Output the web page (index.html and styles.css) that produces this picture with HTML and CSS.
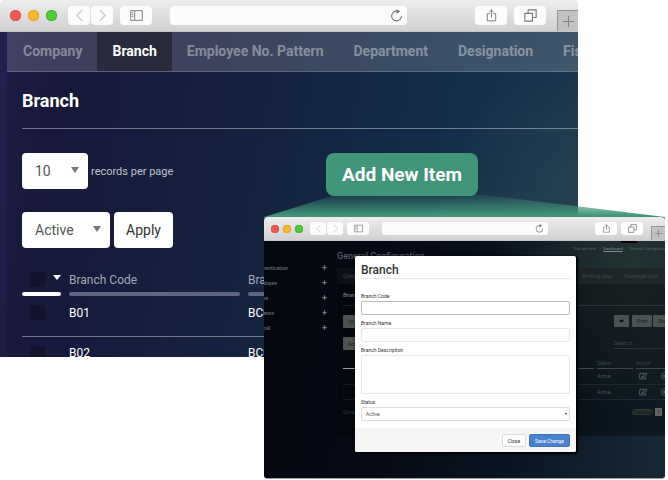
FILE: index.html
```html
<!DOCTYPE html>
<html lang="en">
<head>
<meta charset="utf-8">
<meta name="viewport" content="width=device-width, initial-scale=1">
<title>Branch configuration</title>
<link rel="stylesheet" href="styles.css">
</head>
<body>
<svg class="sprite" aria-hidden="true">
  <symbol id="i-back" viewBox="0 0 12 12"><path d="M8.500 1 3.500 6l5 5"/></symbol>
  <symbol id="i-next" viewBox="0 0 12 12"><path d="m3.500 1 5 5-5 5"/></symbol>
  <symbol id="i-side" viewBox="0 0 14 12"><path d="M.8.800h12.400v10.400H.8zM5 .8v10.400M2 3h1.500M2 5h1.500M2 7h1.500"/></symbol>
  <symbol id="i-reload" viewBox="0 0 12 12"><path d="M10.500 6.200A4.500 4.500 0 1 1 6.500 2"/><path class="solid" d="M6 0l3.500 2.200L6 4.500z"/></symbol>
  <symbol id="i-share" viewBox="0 0 12 14"><path d="M4 5H1.500v7.800h9V5H8M6 9V1.200M3.600 3.300 6 1l2.400 2.300"/></symbol>
  <symbol id="i-tabs" viewBox="0 0 12 12"><path d="M.8 4h7v7.200h-7zM3.800 4V.800h7.400v7H8"/></symbol>
  <symbol id="i-plus" viewBox="0 0 12 12"><path d="M6 .8v10.400M.8 6h10.400"/></symbol>
  <symbol id="i-edit" viewBox="0 0 12 10"><path d="M9 6v3H1V1.500h6"/><path d="m4 7 .6-2.200L9.500.700l1.500 1.500-4.800 4.300z"/></symbol>
  <symbol id="i-disc" viewBox="0 0 12 12"><circle cx="6" cy="6" r="5"/><circle class="solid" cx="6" cy="6" r="2"/></symbol>
  <symbol id="i-eye" viewBox="0 0 12 8"><path class="solid" d="M0 4q6-7 12 0-6 7-12 0z"/></symbol>
</svg>

<main class="scene">
  <section class="window window--back">
    <header class="chrome">
      <span class="light light--red"></span><span class="light light--amber"></span><span class="light light--green"></span>
      <div class="nav">
        <button class="chip chip--nav" aria-label="Back"><svg><use href="#i-back"/></svg></button>
        <button class="chip chip--nav" aria-label="Forward"><svg><use href="#i-next"/></svg></button>
      </div>
      <button class="chip chip--side" aria-label="Sidebar"><svg><use href="#i-side"/></svg></button>
      <div class="address"><input type="text" aria-label="Address"><svg><use href="#i-reload"/></svg></div>
      <button class="chip chip--share" aria-label="Share"><svg><use href="#i-share"/></svg></button>
      <button class="chip chip--tabs" aria-label="Tabs"><svg><use href="#i-tabs"/></svg></button>
      <button class="new-tab" aria-label="New tab"><svg><use href="#i-plus"/></svg></button>
    </header>
    <div class="page">
      <div class="panel">
        <nav class="tabs">
          <a href="#">Company</a><a href="#" class="active">Branch</a><a href="#">Employee No. Pattern</a><a href="#">Department</a><a href="#">Designation</a><a href="#">Fiscal Year</a>
        </nav>
        <div class="content">
          <h1>Branch</h1>
          <div class="toolbar">
            <label class="records"><span class="pick pick--count"><select><option>10</option></select></span>records per page</label>
            <button class="add">Add New Item</button>
          </div>
          <div class="bulk">
            <span class="pick pick--state"><select aria-label="Status"><option>Active</option></select></span>
            <button class="apply">Apply</button>
          </div>
          <table class="grid">
            <thead>
              <tr>
                <th class="col-check"><div class="cell"><input type="checkbox" aria-label="Select all"><i class="sort"></i></div></th>
                <th class="col-code"><div class="cell">Branch Code</div></th>
                <th><div class="cell">Branch Name</div></th>
              </tr>
            </thead>
            <tbody>
              <tr><td><input type="checkbox" aria-label="Select B01"></td><td>B01</td><td>BC01</td></tr>
              <tr><td><input type="checkbox" aria-label="Select B02"></td><td>B02</td><td>BC02</td></tr>
            </tbody>
          </table>
        </div>
      </div>
    </div>
  </section>

  <div class="beam"></div>

  <section class="window window--front">
    <header class="chrome">
      <span class="light light--red"></span><span class="light light--amber"></span><span class="light light--green"></span>
      <div class="nav">
        <button class="chip chip--nav" aria-label="Back"><svg><use href="#i-back"/></svg></button>
        <button class="chip chip--nav" aria-label="Forward"><svg><use href="#i-next"/></svg></button>
      </div>
      <button class="chip chip--side" aria-label="Sidebar"><svg><use href="#i-side"/></svg></button>
      <div class="address"><input type="text" aria-label="Address"><svg><use href="#i-reload"/></svg></div>
      <button class="chip chip--share" aria-label="Share"><svg><use href="#i-share"/></svg></button>
      <button class="chip chip--tabs" aria-label="Tabs"><svg><use href="#i-tabs"/></svg></button>
      <button class="new-tab" aria-label="New tab"><svg><use href="#i-plus"/></svg></button>
    </header>
    <div class="dim">
      <ul class="menu">
        <li>Authentication<svg><use href="#i-plus"/></svg></li>
        <li>Employee<svg><use href="#i-plus"/></svg></li>
        <li>Leave<svg><use href="#i-plus"/></svg></li>
        <li>Expense<svg><use href="#i-plus"/></svg></li>
        <li>Payroll<svg><use href="#i-plus"/></svg></li>
      </ul>
      <div class="dim-main">
        <div class="crumbs"><span>You are here</span><span>›</span><a href="#">Dashboard</a><span>›</span><span>General Configuration</span></div>
        <h2>General Configuration</h2>
        <div class="dim-panel">
          <nav class="dim-tabs"><a href="#" class="first">Company</a><a href="#">Working Days</a><a href="#">Exchange Rate</a></nav>
          <h3>Branch</h3>
          <div class="dim-row">
            <button class="dim-btn dim-btn--field">10</button>
            <button class="dim-btn" aria-label="Show columns"><svg><use href="#i-eye"/></svg></button>
            <div class="dim-group"><button class="dim-btn">Print</button><button class="dim-btn">Export</button></div>
          </div>
          <div class="dim-row">
            <button class="dim-btn dim-btn--field">Active</button>
            <input class="dim-search" type="text" placeholder="Search" aria-label="Search">
          </div>
          <table class="dim-grid">
            <thead><tr><th class="d-check"><div></div></th><th class="d-wide"><div></div></th><th class="d-status"><div>Status</div></th><th><div>Action</div></th></tr></thead>
            <tbody>
              <tr><td></td><td></td><td>Active</td><td><div class="acts"><svg><use href="#i-edit"/></svg><svg><use href="#i-disc"/></svg></div></td></tr>
              <tr><td></td><td></td><td>Active</td><td><div class="acts"><svg><use href="#i-edit"/></svg><svg><use href="#i-disc"/></svg></div></td></tr>
            </tbody>
          </table>
          <div class="dim-foot"><span>Showing</span><a class="prev" href="#">Previous</a><a class="num" href="#">1</a></div>
        </div>
      </div>
    </div>

    <form class="modal">
      <div class="modal-body">
        <h2>Branch</h2>
        <label for="code">Branch Code</label>
        <input id="code" class="strong" type="text">
        <label for="name">Branch Name</label>
        <input id="name" type="text">
        <label for="desc">Branch Description</label>
        <textarea id="desc"></textarea>
        <label for="status">Status</label>
        <span class="pick pick--form"><select id="status"><option>Active</option></select></span>
      </div>
      <footer>
        <button type="button" class="close">Close</button>
        <button type="button" class="save">Save Change</button>
      </footer>
    </form>
  </section>
</main>
</body>
</html>
```
FILE: styles.css
```css
* { box-sizing: border-box; }
body { margin: 0; background: #fff; font-family: Roboto, "Liberation Sans", sans-serif; overflow: hidden; }
button, input, select, textarea { font: inherit; margin: 0; padding: 0; border: 0; appearance: none; outline: 0; }
h1, h2, h3, ul { margin: 0; padding: 0; font-weight: 500; }
a { color: inherit; text-decoration: none; }
.sprite { position: absolute; width: 0; height: 0; }
svg { fill: none; stroke: currentColor; stroke-width: 1; display: block; flex: none; }
.solid { fill: currentColor; stroke: none; }

.scene { position: relative; min-height: 480px; }
.window { overflow: hidden; }

/* browser chrome, sized by each window */
.window--back { --bar: 32px; --light: 11px; --gap: 7px; --chip: 19px; --nav: 22px; --wide: 32px; --icon: 13px; --lead: 10px; --nav-gap: 11px; --address-gap: 18px; --share-gap: 68px; --plus-gap: 11px; --plus: 21px; --round: 4px; }
.window--front { --bar: 24px; --light: 8px; --gap: 4px; --chip: 13px; --nav: 16px; --wide: 22px; --icon: 9px; --lead: 7px; --nav-gap: 7px; --address-gap: 13px; --share-gap: 47px; --plus-gap: 8px; --plus: 14px; --round: 3px; }
.chrome { display: flex; align-items: center; height: var(--bar); padding-left: var(--lead); background: linear-gradient(#eeecee, #d2d1d2); border-bottom: 1px solid #c4c6cb; }
.light { flex: none; width: var(--light); height: var(--light); border-radius: 50%; margin-right: var(--gap); }
.light--red { background: #ee5b56; box-shadow: inset 0 0 0 1px #dc5049; }
.light--amber { background: #f6ba2c; box-shadow: inset 0 0 0 1px #dda42a; }
.light--green { background: #53c93d; box-shadow: inset 0 0 0 1px #43b02f; margin-right: var(--nav-gap); }
.nav { display: flex; flex: none; gap: 1px; margin-right: var(--gap); }
.chip { display: flex; align-items: center; justify-content: center; height: var(--chip); width: var(--wide); flex: none; background: #fcfcfc; border-radius: var(--round); color: #777; }
.chip svg, .address svg, .new-tab svg { width: var(--icon); height: var(--icon); }
.chip--nav { width: var(--nav); color: #c4c4c4; }
.address { flex: 1; min-width: 0; display: flex; align-items: center; height: var(--chip); margin: 0 var(--share-gap) 0 var(--address-gap); padding-right: 4px; background: #fcfcfc; border-radius: var(--round); color: #777; }
.address input { flex: 1; min-width: 0; height: 100%; background: none; }
.chip--tabs { margin: 0 var(--plus-gap) 0 var(--gap); }
.new-tab { align-self: flex-end; flex: none; display: flex; align-items: center; justify-content: center; width: var(--plus); height: var(--plus); background: #c3c2c3; border: solid #969596; border-width: 1px 0 0 1px; color: #858485; }

/* back window */
.window--back { height: 357px; margin-right: 90px; border-radius: 4px 4px 0 0; }
.page { height: 100%; padding-left: 7px; background: radial-gradient(circle at 106% 52%, #30525c 0, rgba(48, 82, 92, 0) 28%), linear-gradient(100deg, #23224f 0, #1c1c42 10%, #182845 42%, #183654 72%, #21415a 100%); }
.panel { height: 100%; background: rgba(8, 12, 28, .2); }
.tabs { display: flex; height: 40px; padding-left: 1px; background: rgba(255, 255, 255, .17); border-bottom: 1px solid rgba(255, 255, 255, .17); white-space: nowrap; overflow: hidden; font-size: 14px; font-weight: 700; line-height: 39px; color: rgba(255, 255, 255, .4); }
.tabs a { padding: 0 15px; }
.tabs .active { background: #292a3b; color: #fff; }
.content { padding-left: 15px; color: #fff; }
h1 { height: 57px; margin-bottom: 24px; border-bottom: 1px solid rgba(255, 255, 255, .38); font-size: 18px; line-height: 57px; font-weight: 700; }
.toolbar { display: flex; justify-content: space-between; align-items: flex-start; height: 59px; padding-right: 100px; }
.records { display: flex; align-items: center; gap: 3px; font-size: 11px; color: #bcc1cc; }
.pick { position: relative; display: block; }
.pick::after { content: ""; position: absolute; right: 9px; top: 14px; border: solid transparent; border-width: 6px 4px 0; border-top-color: #777; pointer-events: none; }
.pick select { width: 100%; height: 36px; padding-left: 13px; background: #fff; border-radius: 4px; font-size: 14px; color: #555; }
.pick--count { width: 66px; }
.pick--state { width: 88px; }
.add { width: 152px; height: 43px; border-radius: 8px; background: #41957a; color: #fff; font-size: 19px; font-weight: 700; }
.bulk { display: flex; gap: 4px; margin-bottom: 19px; }
.apply { width: 59px; height: 36px; border-radius: 4px; background: #fff; color: #333; font-size: 14px; }
.grid { width: 100%; table-layout: fixed; border-collapse: collapse; text-align: left; font-size: 12px; }
.col-check { width: 47px; }
.col-code { width: 179px; }
.grid th { padding: 0 8px 0 0; font-weight: 400; color: #a3a8b5; }
.cell { display: flex; align-items: center; height: 25px; }
.grid th::after { content: ""; display: block; height: 4px; border-radius: 2px; background: #5f6680; }
.col-check .cell { justify-content: space-between; padding-left: 8px; }
.grid .col-check::after { background: #fff; }
.grid td { height: 40px; padding: 0 0 6px; vertical-align: middle; border-bottom: 1px solid rgba(255, 255, 255, .4); }
.grid input { display: block; width: 15px; height: 15px; border-radius: 2px; background: #13142c; }
.grid td input { margin-left: 8px; }
.sort { border: solid transparent; border-width: 5px 4px 0; border-top-color: #fff; margin-bottom: 4px; }

/* light cone joining the button and the front window */
.beam { position: absolute; top: 194px; left: 264px; right: 3px; height: 24px; background: linear-gradient(rgba(65, 149, 122, .1), #41957a 90%); clip-path: polygon(17% 8%, 53% 0, 100% 96%, 100% 100%, 0 100%, 0 96%); }

/* front window */
.window--front { position: absolute; top: 217px; left: 264px; right: 3px; height: 262px; border-radius: 4px; background: #05070f; border-bottom: 1px solid #999ea3; }
.dim { display: grid; grid-template-columns: 73px minmax(0, 1fr); height: 238px; background: radial-gradient(circle at 92% 14%, #243332 0, rgba(36, 51, 50, 0) 34%), linear-gradient(100deg, #05070f 0, #060a15 35%, #0a1522 65%, #182936 100%); font-size: 5px; color: #4d5258; }
.menu { list-style: none; margin-left: -9px; padding-top: 19px; color: #6a6d72; }
.menu li { display: flex; align-items: center; justify-content: space-between; height: 15px; padding-right: 10px; }
.menu svg { width: 5px; height: 5px; stroke-width: 3; color: #777; }
.dim-main { position: relative; white-space: nowrap; overflow: hidden; }
.dim-main::before { content: ""; position: absolute; top: 0; right: 28px; width: 16px; height: 2px; background: #0b0305; }
.crumbs { display: flex; gap: 3px; height: 9px; padding: 5px 0 0 237px; font-size: 4px; line-height: 6px; color: #5d6266; }
.crumbs a { text-decoration: underline; color: #83888c; }
.dim-main h2 { height: 18px; font-size: 9px; line-height: 13px; color: #54575d; }
.dim-panel { height: 168px; background: rgba(3, 5, 8, .4); overflow: hidden; padding-left: 6px; }
.dim-tabs { display: flex; gap: 12px; height: 16px; margin-left: -6px; padding-left: 6px; line-height: 16px; background: rgba(255, 255, 255, .04); color: #41484c; }
.dim-tabs .first { width: 227px; }
h3 { height: 22px; margin-bottom: 9px; line-height: 22px; font-size: 6px; border-bottom: 1px solid rgba(255, 255, 255, .1); color: #777; }
.dim-row { display: flex; gap: 3px; height: 22px; }
.dim-btn { height: 12px; padding: 0 5px; border-radius: 1px; background: #4c5252; color: #151919; }
.dim-btn--field { width: 30px; height: 13px; margin-right: 238px; text-align: left; flex: none; }
.dim-btn svg { width: 5px; height: 4px; }
.dim-group { display: flex; gap: 1px; }
.dim-search { width: 60px; height: 12px; flex: none; background: none; border-bottom: 1px solid #2b3634; color: #3e4745; }
.dim-search::placeholder { color: #3e4745; font-size: 6px; }
.dim-grid { width: 340px; table-layout: fixed; border-collapse: collapse; text-align: left; }
.dim-grid th { padding: 0 3px 0 0; font-weight: 400; color: #3d474b; }
.dim-grid th div { height: 10px; line-height: 9px; border-bottom: 1px solid #3d484b; }
.dim-grid .d-check { width: 16px; }
.dim-grid .d-check div { border-color: #999; }
.dim-grid .d-wide { width: 238px; }
.dim-grid .d-status { width: 39px; }
.dim-grid td { height: 15px; padding: 0; border-bottom: 1px solid rgba(255, 255, 255, .07); }
.acts { display: flex; gap: 12px; padding-left: 3px; color: #697478; }
.acts svg { width: 9px; height: 8px; }
.dim-foot { display: flex; align-items: center; gap: 2px; height: 24px; }
.dim-foot span { width: 287px; color: #35383d; flex: none; }
.prev { padding: 0 1px; border-radius: 3px; background: #29332f; color: #0e1414; }
.num { padding: 1px 2px; background: #656466; color: #151515; }

.modal { position: absolute; top: 39px; left: 91px; right: 89px; background: #fff; border-radius: 2px; box-shadow: 1px 1px 2px 1px #000; font-size: 5px; color: #333; overflow: hidden; }
.modal-body { padding: 5px 6px 7px; }
.modal h2 { height: 18px; margin-bottom: 14px; border-bottom: 1px solid #e9e9e9; font-size: 12px; line-height: 18px; color: #333; }
.modal label { display: block; height: 8px; line-height: 6px; }
.modal input, .modal textarea, .modal select { display: block; width: 100%; height: 14px; border: 1px solid #e8e8e8; border-radius: 2px; background: #fff; margin-bottom: 5px; }
.modal .strong { border-color: #bbb; }
.modal textarea { height: 39px; resize: none; }
.modal select { padding-left: 4px; margin: 0; border-color: #ddd; font-size: 5px; }
.pick--form::after { right: 3px; top: 6px; border-width: 2px 1px 0; border-top-color: #333; }
.modal footer { display: flex; justify-content: flex-end; gap: 3px; padding: 6px 6px 5px; background: #f6f6f6; }
.modal button { height: 13px; padding: 0 5px; border: 1px solid #ddd; border-radius: 2px; background: #fff; color: #333; }
.modal .save { background: #4a82d0; border-color: #3f74bd; color: #fff; }
```
